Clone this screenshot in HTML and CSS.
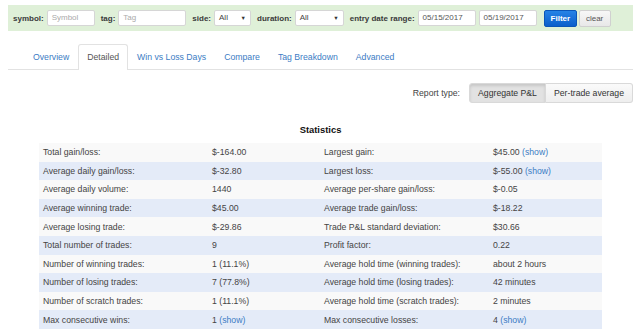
FILE: index.html
```html
<!DOCTYPE html>
<html lang="en">
<head>
    <meta charset="UTF-8">
    <title>Trade Report - Detailed</title>
    <link rel="stylesheet" href="styles.css">
</head>
<body>
<div class="page">

    <!-- Filter bar -->
    <form class="filter-bar">
        <label class="field-label">symbol:</label>
        <div class="input input-symbol placeholder">Symbol</div>
        <label class="field-label">tag:</label>
        <div class="input input-tag placeholder">Tag</div>
        <label class="field-label">side:</label>
        <div class="input select select-side"><span>All</span><span class="caret">&#9660;</span></div>
        <label class="field-label">duration:</label>
        <div class="input select select-duration"><span>All</span><span class="caret">&#9660;</span></div>
        <label class="field-label">entry date range:</label>
        <div class="input input-date">05/15/2017</div>
        <div class="input input-date">05/19/2017</div>
        <button type="button" class="btn btn-filter">Filter</button>
        <button type="button" class="btn btn-clear">clear</button>
    </form>

    <!-- Tabs -->
    <ul class="nav-tabs">
        <li><a href="#">Overview</a></li>
        <li class="active"><a href="#">Detailed</a></li>
        <li><a href="#">Win vs Loss Days</a></li>
        <li><a href="#">Compare</a></li>
        <li><a href="#">Tag Breakdown</a></li>
        <li><a href="#">Advanced</a></li>
    </ul>

    <div class="report-type">
        <span class="report-label">Report type:</span>
        <div class="btn-group">
            <button type="button" class="toggle active">Aggregate P&amp;L</button>
            <button type="button" class="toggle">Per-trade average</button>
        </div>
    </div>

    <h3 class="stats-title">Statistics</h3>

    <table class="stats">
        <colgroup>
            <col class="c-label"><col class="c-value"><col class="c-label"><col class="c-value2">
        </colgroup>
        <tr><td>Total gain/loss:</td><td>$-164.00</td><td>Largest gain:</td><td>$45.00 <a href="#">(show)</a></td></tr>
        <tr><td>Average daily gain/loss:</td><td>$-32.80</td><td>Largest loss:</td><td>$-55.00 <a href="#">(show)</a></td></tr>
        <tr><td>Average daily volume:</td><td>1440</td><td>Average per-share gain/loss:</td><td>$-0.05</td></tr>
        <tr><td>Average winning trade:</td><td>$45.00</td><td>Average trade gain/loss:</td><td>$-18.22</td></tr>
        <tr><td>Average losing trade:</td><td>$-29.86</td><td>Trade P&amp;L standard deviation:</td><td>$30.66</td></tr>
        <tr><td>Total number of trades:</td><td>9</td><td>Profit factor:</td><td>0.22</td></tr>
        <tr><td>Number of winning trades:</td><td>1 (11.1%)</td><td>Average hold time (winning trades):</td><td>about 2 hours</td></tr>
        <tr><td>Number of losing trades:</td><td>7 (77.8%)</td><td>Average hold time (losing trades):</td><td>42 minutes</td></tr>
        <tr><td>Number of scratch trades:</td><td>1 (11.1%)</td><td>Average hold time (scratch trades):</td><td>2 minutes</td></tr>
        <tr><td>Max consecutive wins:</td><td>1 <a href="#">(show)</a></td><td>Max consecutive losses:</td><td>4 <a href="#">(show)</a></td></tr>
    </table>

</div>
</body>
</html>
```

FILE: styles.css
```css
/* General */
body {
    margin: 0;
    background: #fff;
    font-family: "Liberation Sans", Arial, sans-serif;
    color: #333;
    overflow: hidden;
}

.page {
    padding: 0 7px 0 8px;
}

a {
    color: #3b7cc4;
    text-decoration: none;
}

/* --- Filter bar --- */
.filter-bar {
    display: flex;
    align-items: center;
    height: 26px;
    margin: 5px 0 0;
    padding-left: 5px;
    background: #dff0d8;
    font-size: 8px;
}

.field-label {
    font-weight: bold;
    color: #3a3a3a;
    margin-right: 3px;
    margin-left: 6px;
}
.field-label:first-child { margin-left: 0; }

.input {
    box-sizing: border-box;
    height: 16px;
    line-height: 14px;
    padding: 0 4px;
    background: #fff;
    border: 1px solid #d6d6d6;
    border-radius: 2px;
    color: #555;
    font-size: 8px;
}
.placeholder { color: #aaa; }

.input-symbol { width: 48px; }
.input-tag { width: 68px; }
.input-date { width: 58px; margin-right: 3px; }

.select {
    display: flex;
    justify-content: space-between;
    align-items: center;
    color: #444;
}
.select-side { width: 37px; }
.select-duration { width: 49px; }
.caret { font-size: 5.5px; color: #333; }

.btn {
    box-sizing: border-box;
    height: 17px;
    padding: 0 6px;
    font-family: inherit;
    font-size: 8px;
    border-radius: 2px;
    cursor: pointer;
}
.btn-filter {
    width: 33px;
    margin-left: 4px;
    color: #fff;
    font-weight: bold;
    background: linear-gradient(#2583e6, #0b5fcb);
    border: 1px solid #0a56b8;
}
.btn-clear {
    width: 32px;
    margin-left: 2px;
    color: #555;
    background: linear-gradient(#f7f7f7, #e8e8e8);
    border: 1px solid #d0d0d0;
}

/* --- Tabs --- */
.nav-tabs {
    display: flex;
    list-style: none;
    margin: 13px 0 0;
    padding: 0 0 0 16px;
    border-bottom: 1px solid #e2e2e2;
    font-size: 8.7px;
}
.nav-tabs li {
    margin-bottom: -1px;
}
.nav-tabs a {
    display: block;
    height: 24px;
    line-height: 24px;
    padding: 0 8px;
    border: 1px solid transparent;
    border-bottom: none;
    border-radius: 3px 3px 0 0;
}
.nav-tabs .active a {
    color: #555;
    background: #fff;
    border-color: #e2e2e2;
    height: 25px;
}

/* --- Report type --- */
.report-type {
    display: flex;
    justify-content: flex-end;
    align-items: center;
    margin-top: 13px;
    font-size: 8.7px;
}
.report-label {
    margin-right: 9px;
    color: #444;
}
.btn-group { display: flex; }
.toggle {
    height: 20px;
    padding: 0 8px;
    font-family: inherit;
    font-size: 8.7px;
    color: #333;
    white-space: nowrap;
    background: linear-gradient(#fafafa, #eeeeee);
    border: 1px solid #d9d9d9;
}
.toggle:first-child { border-radius: 3px 0 0 3px; }
.toggle:last-child { border-radius: 0 3px 3px 0; border-left: none; }
.toggle.active {
    background: #e2e2e2;
    box-shadow: inset 0 2px 3px rgba(0, 0, 0, 0.12);
}

/* --- Statistics --- */
.stats-title {
    margin: 20px 0 6px;
    text-align: center;
    font-size: 9.4px;
    line-height: 14px;
    color: #111;
}

.stats {
    width: 563px;
    margin: 0 auto;
    border-collapse: collapse;
    font-size: 8.7px;
    color: #444;
}
.c-label { width: 169px; }
.c-value { width: 112px; }
.c-value2 { width: 113px; }

.stats tr { height: 18.6px; background: #f9f9f9; }
.stats tr:nth-child(even) { background: #e4ebf8; }
.stats td {
    padding: 0 4px;
    white-space: nowrap;
}
```
